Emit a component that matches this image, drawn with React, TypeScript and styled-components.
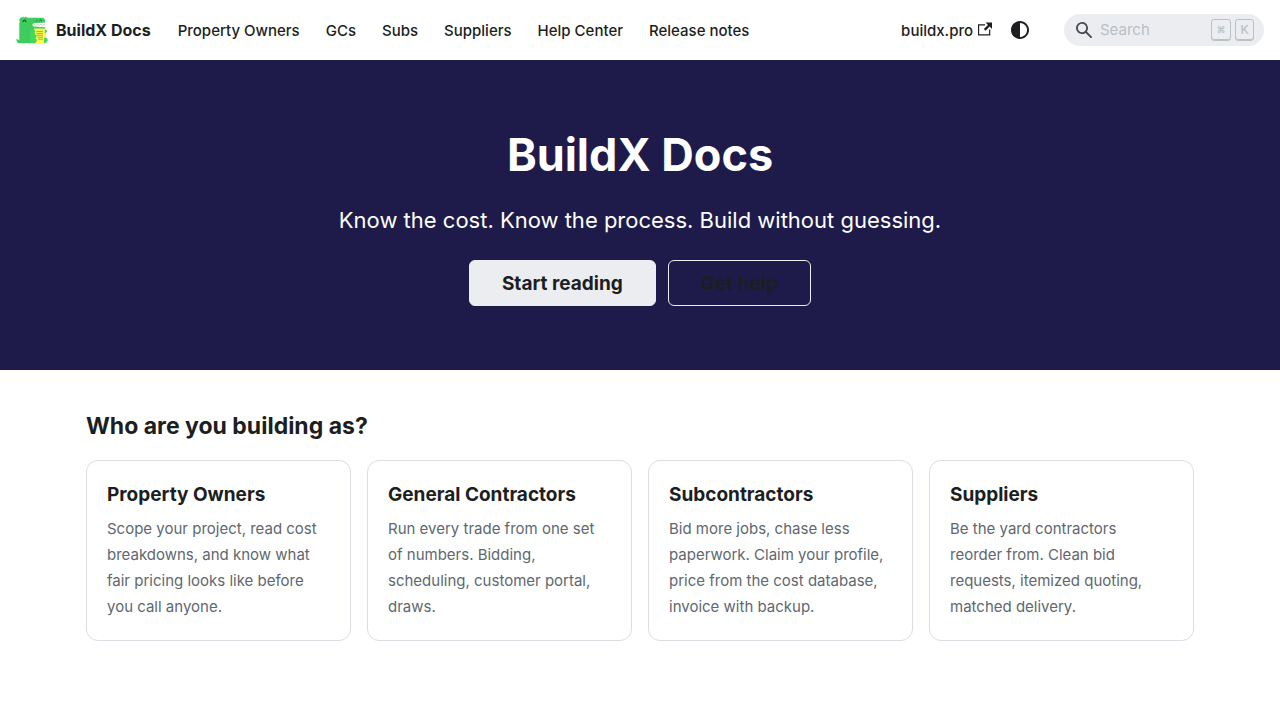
import React from "react";
import styled, { createGlobalStyle } from "styled-components";

const GlobalStyle = createGlobalStyle`
  *, *::before, *::after { box-sizing: border-box; }
  body {
    margin: 0;
    background: #ffffff;
    color: #1c1e21;
    font-family: Inter, "Liberation Sans", sans-serif;
    font-size: 15px;
    line-height: 26px;
  }
`;

const Navbar = styled.nav`
  display: flex;
  align-items: center;
  justify-content: space-between;
  height: 60px;
  padding: 8px 16px;
`;

const NavGroup = styled.div`
  display: flex;
  align-items: center;
`;

const Brand = styled.a`
  display: flex;
  align-items: center;
  gap: 8px;
  margin-right: 14px;
  color: inherit;
  font-size: 16px;
  font-weight: 700;
  text-decoration: none;
`;

const NavLink = styled.a`
  display: flex;
  align-items: center;
  gap: 5px;
  padding: 1px 13px 0;
  color: inherit;
  font-weight: 500;
  text-decoration: none;
  white-space: nowrap;
`;

const ExternalIcon = styled.svg`
  width: 14px;
  height: 14px;
  margin-bottom: 4px;
`;

const ThemeToggle = styled.button`
  display: grid;
  place-items: center;
  width: 32px;
  height: 32px;
  margin-left: -1px;
  padding: 0;
  border: 0;
  border-radius: 50%;
  background: none;
  color: inherit;
`;

const SearchBox = styled.label`
  display: flex;
  align-items: center;
  gap: 8px;
  width: 200px;
  height: 32px;
  margin-left: 28px;
  padding: 0 10px 0 12px;
  border-radius: 16px;
  background: #ebedf0;
  color: #474b52;
`;

const SearchInput = styled.input`
  flex: 1;
  min-width: 0;
  padding: 0;
  border: 0;
  outline: 0;
  background: none;
  color: #1c1e21;
  font: inherit;
  &::placeholder { color: #b9bfc6; opacity: 1; }
`;

const Keys = styled.span`
  display: flex;
  gap: 4px;
`;

const Key = styled.kbd<{ $small?: boolean }>`
  display: grid;
  place-items: center;
  width: ${(p) => (p.$small ? "20px" : "19px")};
  height: 22px;
  border: 1px solid #b9c1c6;
  border-radius: 3px;
  box-shadow: inset 0 -1px 0 #b9c1c6;
  color: #b9c1c6;
  font-family: inherit;
  font-size: ${(p) => (p.$small ? "9px" : "12px")};
  font-weight: ${(p) => (p.$small ? 700 : 500)};
  line-height: 20px;
`;

const Hero = styled.header`
  display: flex;
  flex-direction: column;
  align-items: center;
  padding: 64px 32px;
  background: #1e1b4b;
  color: #ffffff;
  text-align: center;
`;

const HeroTitle = styled.h1`
  margin: 0 0 14px;
  font-size: 45px;
  font-weight: 700;
  line-height: 62px;
`;

const HeroSubtitle = styled.p`
  margin: 0 0 20px;
  font-size: 22px;
  line-height: 40px;
`;

const HeroActions = styled.div`
  display: flex;
  gap: 12px;
`;

const HeroLink = styled.a<{ $outline?: boolean }>`
  padding: 9px 32px 7px;
  border: 1px solid #ebedf0;
  border-radius: 6px;
  background: ${(p) => (p.$outline ? "transparent" : "#ebedf0")};
  color: #1c1e21;
  font-size: 19px;
  font-weight: 700;
  line-height: 28px;
  text-decoration: none;
`;

const Section = styled.main`
  max-width: 1140px;
  margin: 0 auto;
  padding: 40px 16px;
`;

const SectionTitle = styled.h2`
  margin: 0 0 18px;
  font-size: 23px;
  font-weight: 700;
  line-height: 32px;
`;

const CardGrid = styled.div`
  display: grid;
  grid-template-columns: repeat(auto-fit, minmax(220px, 1fr));
  gap: 16px;
`;

const Card = styled.a`
  padding: 20px 24px 20px 20px;
  border: 1px solid #dadde1;
  border-radius: 12px;
  color: inherit;
  text-decoration: none;
`;

const CardTitle = styled.h3`
  margin: 0 0 8px;
  font-size: 19px;
  font-weight: 700;
  line-height: 27px;
`;

const CardText = styled.p`
  margin: 0;
  color: #606770;
`;

const spikes = Array.from({ length: 11 }, (_, i) => {
  const y = 53 + i * 10;
  return `M23 ${y}l-4.3 2.5c-1.9 1.1-1.9 3.9 0 5L23 ${y + 10}z`;
}).join("");

function Logo() {
  return (
    <svg width="32" height="32" viewBox="0 0 200 200" aria-hidden="true">
      <path fill="#fff" d="M99 52h84v34H99z" />
      <path
        fill="#3ecc5f"
        d="M23 163c-7.4 0-13.8-4-17.3-10A19.9 19.9 0 0 0 3 163c0 11 9 20 20 20h20v-20z"
      />
      <path fill="#3ecc5f" d={spikes} />
      <path
        fill="#3ecc5f"
        d="M112.98 57.376L183 53V43c0-11-9-20-20-20H73l-2.5-4.33c-1.1-1.9-3.9-1.9-5 0L63 23l-2.5-4.33c-1.1-1.9-3.9-1.9-5 0L53 23l-2.5-4.33c-1.1-1.9-3.9-1.9-5 0L43 23l-4.2-4.14c-1.6-1.6-4.3-.85-4.8 1.3l-1.4 5.1-5.2-1.4c-2.1-.6-4.1 1.4-3.5 3.5l1.4 5.2-5.1 1.4c-2.1.6-2.9 3.3-1.3 4.8L23 43v120c0 11 9 20 20 20h120c11 0 20-9 20-20V83l-70.02-4.376A10.645 10.645 0 0 1 103 68c0-5.6 4.4-10.3 9.98-10.624"
      />
      <path fill="#ffff50" d="M113 91h70v74c0 10-8 18-18 18h-52z" />
      <path
        fill="none"
        stroke="#77782c"
        strokeWidth="4"
        d="M128 109h40M128 121h40M128 133h40M134 145h34M138 157h30"
      />
      <path
        fill="#44d860"
        d="M92 100c12-5 27-2 28 6 1 4-1 7-5 9 6 3 6 9 1 12 8 1 13 6 13 12 0 5-3 9-8 11 5 3 9 8 9 14 0 11-8 19-20 19H88z"
      />
      <path
        fill="#44d860"
        d="M180 99c7-1 13 3 14 8 1 6-4 11-14 12zM176 147c7-2 13 0 15 4 6 0 8 4 6 8 3 4 2 9-2 11-2 7-8 12-20 13z"
      />
      <path
        fill="none"
        stroke="#191a1a"
        strokeWidth="6"
        strokeLinecap="round"
        d="M44 48c2-7 5-10 9-10s7 3 9 10"
      />
      <path
        fill="none"
        stroke="#191a1a"
        strokeWidth="3"
        strokeLinecap="round"
        d="M126 43l6-3M148 43c1-5 3-6 6-6s5 1 6 6"
      />
      <path
        fill="none"
        stroke="#555"
        strokeWidth="2"
        d="M106 71c5 0 5-6 10-6s5 6 10 6 5-6 10-6 5 6 10 6 5-6 10-6 5 6 10 6 5-6 10-6 4 4 7 5"
      />
    </svg>
  );
}

const navItems = ["Property Owners", "GCs", "Subs", "Suppliers", "Help Center", "Release notes"];

const audiences = [
  {
    title: "Property Owners",
    text: "Scope your project, read cost breakdowns, and know what fair pricing looks like before you call anyone.",
  },
  {
    title: "General Contractors",
    text: "Run every trade from one set of numbers. Bidding, scheduling, customer portal, draws.",
  },
  {
    title: "Subcontractors",
    text: "Bid more jobs, chase less paperwork. Claim your profile, price from the cost database, invoice with backup.",
  },
  {
    title: "Suppliers",
    text: "Be the yard contractors reorder from. Clean bid requests, itemized quoting, matched delivery.",
  },
];

export default function App() {
  return (
    <>
      <GlobalStyle />
      <Navbar>
        <NavGroup>
          <Brand href="#">
            <Logo />
            BuildX Docs
          </Brand>
          {navItems.map((item) => (
            <NavLink key={item} href="#">
              {item}
            </NavLink>
          ))}
        </NavGroup>
        <NavGroup>
          <NavLink href="#">
            buildx.pro
            <ExternalIcon viewBox="0 0 24 24" aria-hidden="true">
              <path
                fill="currentColor"
                d="M21 13v10h-21v-19h12v2h-10v15h17v-8h2zm3-12h-10.988l4.035 4-6.977 7.07 2.828 2.828 6.977-7.07 4.125 4.172v-11z"
              />
            </ExternalIcon>
          </NavLink>
          <ThemeToggle type="button" aria-label="Switch color mode">
            <svg width="24" height="24" viewBox="0 0 24 24" aria-hidden="true">
              <path
                fill="currentColor"
                d="m12 21c4.971 0 9-4.029 9-9s-4.029-9-9-9-9 4.029-9 9 4.029 9 9 9zm4.95-13.95c1.313 1.313 2.05 3.093 2.05 4.95s-0.738 3.637-2.05 4.95c-1.313 1.313-3.093 2.05-4.95 2.05v-14c1.857 0 3.637 0.737 4.95 2.05z"
              />
            </svg>
          </ThemeToggle>
          <SearchBox>
            <svg width="16" height="16" viewBox="0 0 16 16" aria-hidden="true">
              <path
                fill="currentColor"
                d="M6.02945,10.20327a4.17382,4.17382,0,1,1,4.17382-4.17382A4.15609,4.15609,0,0,1,6.02945,10.20327Zm9.69195,4.2199L10.8989,9.59979A5.88021,5.88021,0,0,0,12.058,6.02856,6.00467,6.00467,0,1,0,9.59979,10.8989l4.82338,4.82338a.89729.89729,0,0,0,1.29912,0,.89749.89749,0,0,0-.00087-1.29909Z"
              />
            </svg>
            <SearchInput type="search" placeholder="Search" aria-label="Search" />
            <Keys>
              <Key $small>⌘</Key>
              <Key>K</Key>
            </Keys>
          </SearchBox>
        </NavGroup>
      </Navbar>
      <Hero>
        <HeroTitle>BuildX Docs</HeroTitle>
        <HeroSubtitle>Know the cost. Know the process. Build without guessing.</HeroSubtitle>
        <HeroActions>
          <HeroLink href="#">Start reading</HeroLink>
          <HeroLink href="#" $outline>
            Get help
          </HeroLink>
        </HeroActions>
      </Hero>
      <Section>
        <SectionTitle>Who are you building as?</SectionTitle>
        <CardGrid>
          {audiences.map((a) => (
            <Card key={a.title} href="#">
              <CardTitle>{a.title}</CardTitle>
              <CardText>{a.text}</CardText>
            </Card>
          ))}
        </CardGrid>
      </Section>
    </>
  );
}
